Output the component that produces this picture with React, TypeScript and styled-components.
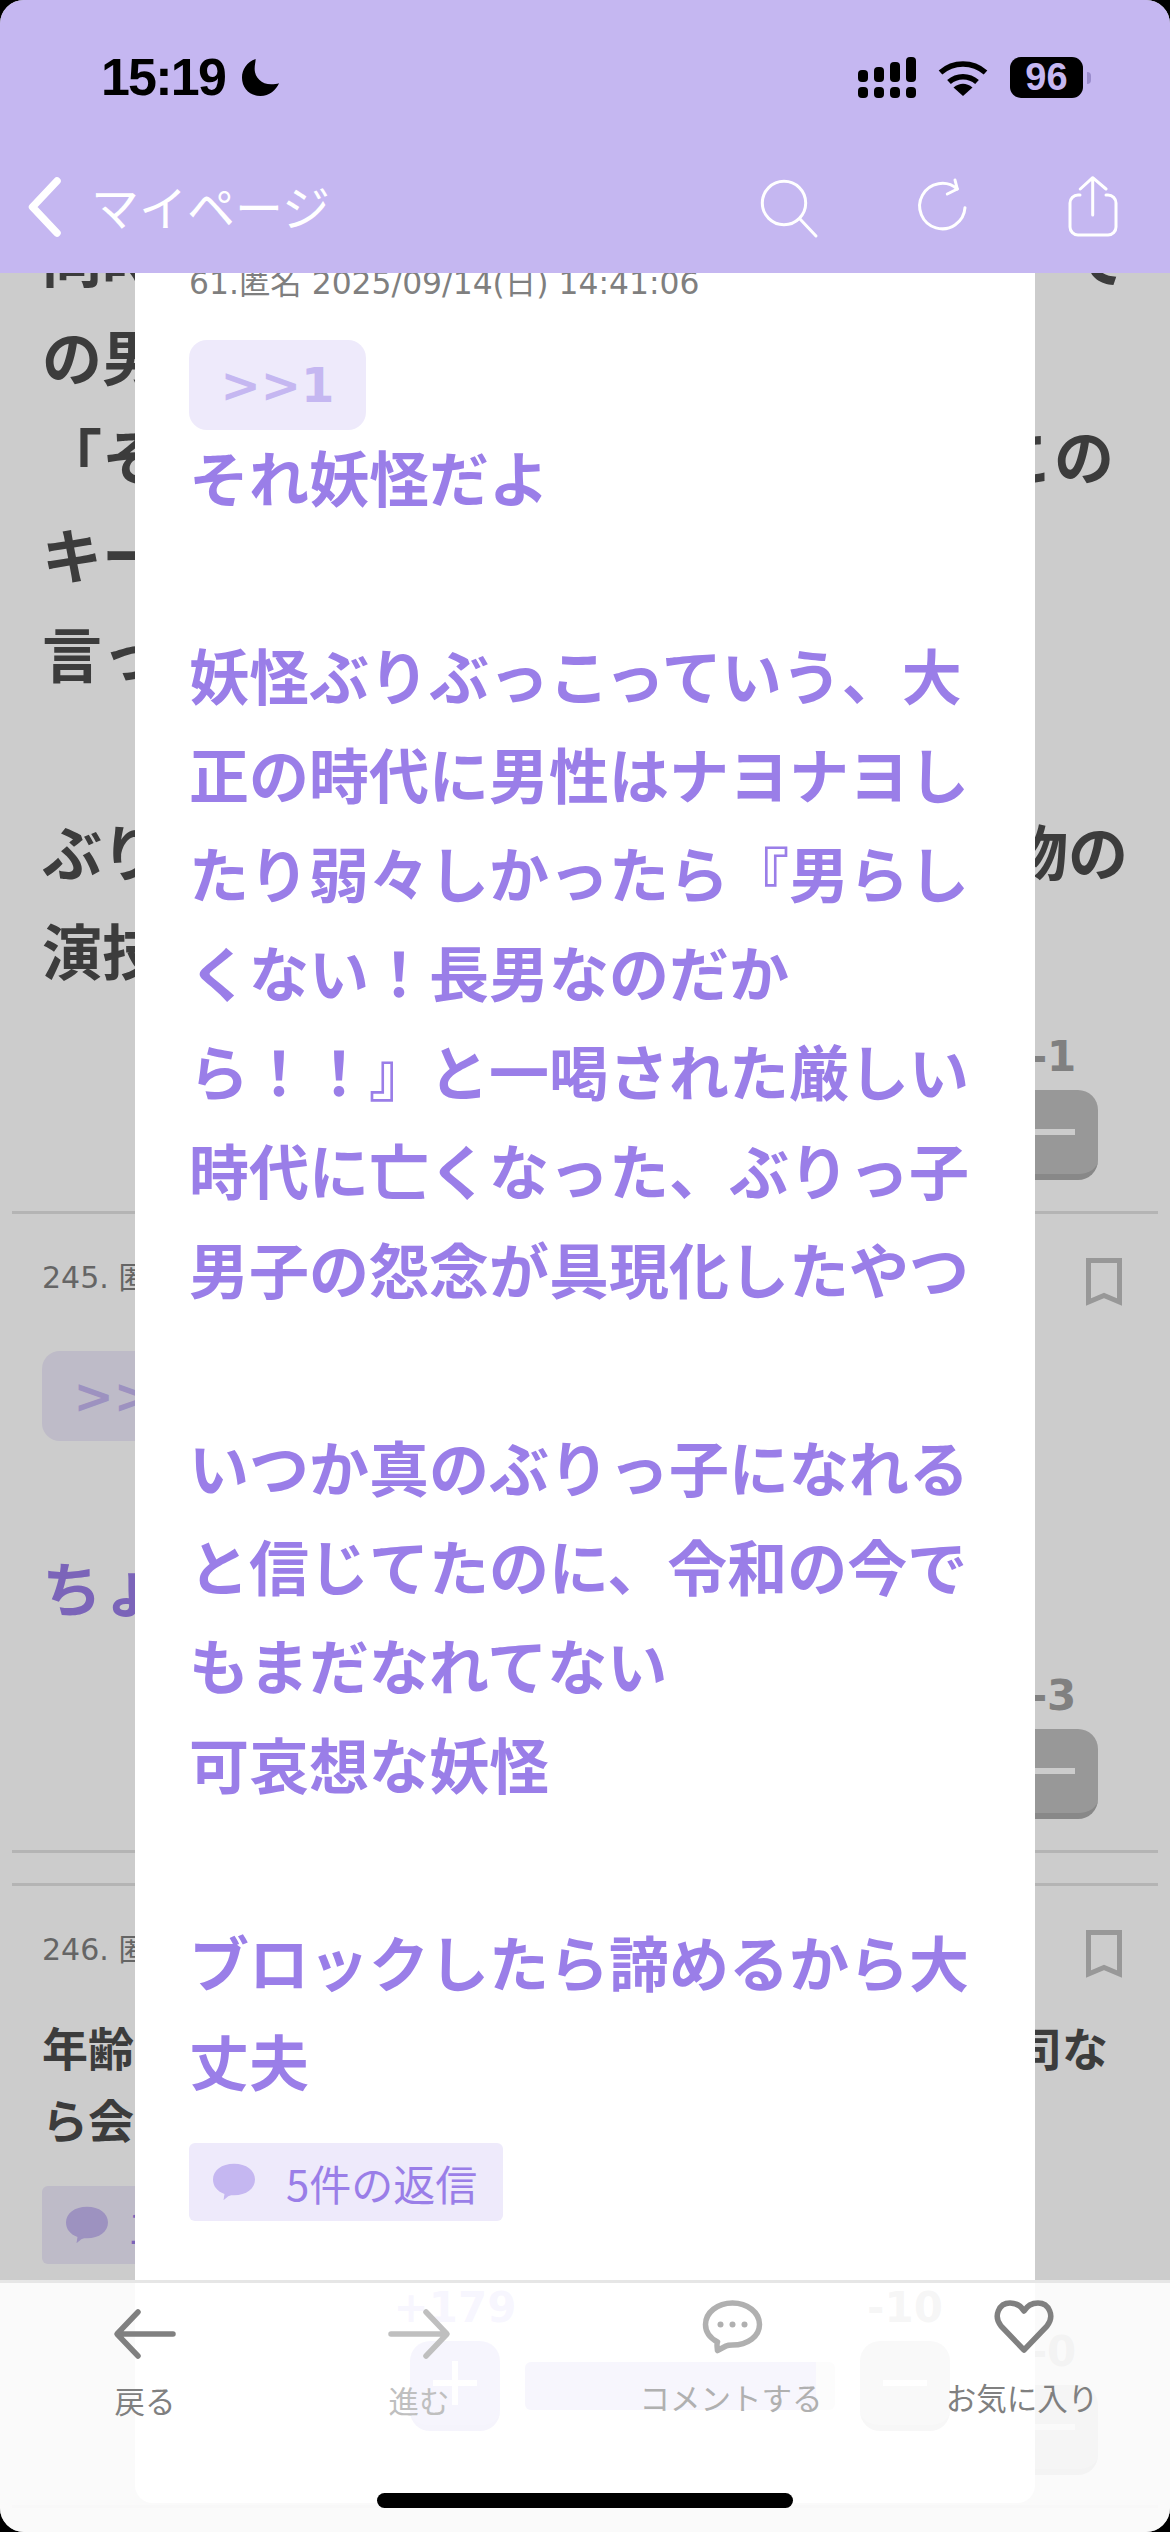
import React from "react";
import styled, { createGlobalStyle } from "styled-components";

const GlobalStyle = createGlobalStyle`
  html, body {
    margin: 0;
    padding: 0;
    background: #000;
  }
  * {
    box-sizing: border-box;
  }
`;

const JP = `"Noto Sans CJK JP", "Noto Sans", sans-serif`;
const META = `"DejaVu Sans", "Noto Sans CJK JP", sans-serif`;

const PLUS_VOTES = 179;
const MINUS_VOTES = 10;

const MODAL_TEXT = `それ妖怪だよ

妖怪ぶりぶっこっていう、大
正の時代に男性はナヨナヨし
たり弱々しかったら『男らし
くない！長男なのだか
ら！！』と一喝された厳しい
時代に亡くなった、ぶりっ子
男子の怨念が具現化したやつ

いつか真のぶりっ子になれる
と信じてたのに、令和の今で
もまだなれてない
可哀想な妖怪

ブロックしたら諦めるから大
丈夫`;

const Moon = () => (
  <MoonSvg viewBox="0 0 40 40">
    <path d="M15 1C6 4 1 12 1 20c0 11 8 19 19 19 9 0 16-6 19-13-2 1-5 1-8 1-10 0-17-7-17-16 0-4 1-7 1-10Z" />
  </MoonSvg>
);

const Signal = () => (
  <svg width="58" height="41" viewBox="0 0 58 41">
    <rect x="0" y="13" width="10" height="12" rx="4" />
    <rect x="16" y="10" width="10" height="15" rx="4" />
    <rect x="32" y="5" width="10" height="20" rx="4" />
    <rect x="48" y="0" width="10" height="25" rx="4" />
    <rect x="0" y="30" width="10" height="11" rx="4" />
    <rect x="16" y="30" width="10" height="11" rx="4" />
    <rect x="32" y="30" width="10" height="11" rx="4" />
    <rect x="48" y="30" width="10" height="11" rx="4" />
  </svg>
);

const Wifi = () => (
  <svg width="50" height="37" viewBox="0 0 50 37">
    <path d="M2.5 13.5A34 34 0 0 1 47.5 13.5" fill="none" stroke="#000" strokeWidth="5.5" />
    <path d="M11 23A21 21 0 0 1 39 23" fill="none" stroke="#000" strokeWidth="5.5" />
    <path d="M25 37 15.5 28.5Q25 21 34.5 28.5Z" />
  </svg>
);

const Chevron = () => (
  <NavSvg width="36" height="64" viewBox="0 0 36 64">
    <path d="M31 5 6.500 31 31 57" strokeWidth="7.500" />
  </NavSvg>
);

const Search = () => (
  <NavSvg width="60" height="64" viewBox="0 0 60 64">
    <circle cx="25" cy="27" r="21.7" strokeWidth="3" />
    <path d="M41 43 57 60" strokeWidth="3" />
  </NavSvg>
);

const Reload = () => (
  <NavSvg width="60" height="64" viewBox="0 0 60 64">
    <path d="M54 31.7A22.7 22.7 0 1 1 46.3 13" strokeWidth="3" />
    <path d="M44 4 46.3 13 36.3 18" strokeWidth="3" />
  </NavSvg>
);

const Share = () => (
  <NavSvg width="60" height="64" viewBox="0 0 60 64">
    <path d="M17 19h-2a8 8 0 0 0-8 8v24a8 8 0 0 0 8 8h30a8 8 0 0 0 8-8V27a8 8 0 0 0-8-8h-2" strokeWidth="3" />
    <path d="M29.7 39V2M17.3 13 29.7 1.7 43 13" strokeWidth="3" />
  </NavSvg>
);

const Bookmark = () => (
  <BookmarkSvg viewBox="0 0 36 48">
    <path d="M2.500 2.500h31V44L18 37.500 2.500 44Z" />
  </BookmarkSvg>
);

const ReplyBubble = () => (
  <ReplySvg viewBox="0 0 44 38">
    <path d="M22 0c13 0 22 7 22 16.500S35 33 22 33c-2 0-4 0-6 1l-5 4 1-6.500C4 29 0 23 0 16.500 0 7 9 0 22 0Z" />
  </ReplySvg>
);

const VoteColumn = ({ label, kind = "minus", top = 0 }: { label: string; kind?: "plus" | "minus"; top?: number }) => (
  <VoteCol $top={top}>
    <VoteLabel $kind={kind}>{label}</VoteLabel>
    <VoteButton $kind={kind}>
      <VoteDash />
      {kind === "plus" && <VoteStem />}
    </VoteButton>
  </VoteCol>
);

const App = () => {
  const fill = (PLUS_VOTES / (PLUS_VOTES + MINUS_VOTES)) * 99;

  return (
    <Page>
      <GlobalStyle />
      <Header>
        <StatusBar>
          <Clock>
            <Time>15:19</Time>
            <Moon />
          </Clock>
          <StatusIcons>
            <Signal />
            <Wifi />
            <Battery>
              <BatteryBody>96</BatteryBody>
              <BatteryNub />
            </Battery>
          </StatusIcons>
        </StatusBar>
        <Nav>
          <Chevron />
          <NavTitle>マイページ</NavTitle>
          <NavActions>
            <Search />
            <Reload />
            <Share />
          </NavActions>
        </Nav>
      </Header>

      <Thread>
        <Post $top={-67}>
          <BodyLine><span>同時</span><span>て</span></BodyLine>
          <BodyLine>の男</BodyLine>
          <BodyLine $end={14}><span>「そ</span><span>この</span></BodyLine>
          <BodyLine>キー</BodyLine>
          <BodyLine>言っ</BodyLine>
          <BodyLine />
          <BodyLine><span>ぶり</span><span>物の</span></BodyLine>
          <BodyLine>演技</BodyLine>
          <VoteColumn label="-1" top={34} />
        </Post>
        <Divider $top={31} />

        <Post $top={44}>
          <MetaRow>
            <MetaText>245. 匿名</MetaText>
            <Bookmark />
          </MetaRow>
          <Anchor $top={45}>&gt;&gt;1</Anchor>
          <BodyLine $top={95} $purple>ちょ</BodyLine>
          <VoteColumn label="-3" top={36} />
        </Post>
        <Divider $top={31} />
        <Divider $top={30} />

        <Post $top={44}>
          <MetaRow>
            <MetaText>246. 匿名</MetaText>
            <Bookmark />
          </MetaRow>
          <BodyLine $top={32} $small $end={20}><span>年齢</span><span>司な</span></BodyLine>
          <BodyLine $small>ら会</BodyLine>
          <ReplyBadge $top={32} $gap={20}>
            <ReplyBubble />
            1件の返信
          </ReplyBadge>
          <VoteColumn label="-0" top={63} />
        </Post>
        <Divider $top={30} />
      </Thread>

      <Scrim />

      <Modal>
        <ModalMeta>61.匿名 2025/09/14(日) 14:41:06</ModalMeta>
        <Anchor $top={36}>&gt;&gt;1</Anchor>
        <ModalBody>{MODAL_TEXT}</ModalBody>
        <ReplyBadge $top={34} $gap={31}>
          <ReplyBubble />
          5件の返信
        </ReplyBadge>
        <VoteRow>
          <VoteColumn label="+179" kind="plus" />
          <VoteBar>
            <VoteBarFill style={{ width: `${fill}%` }} />
          </VoteBar>
          <VoteColumn label="-10" />
        </VoteRow>
      </Modal>

      <TabBar>
        <TabItem $top={27} $gap={24}>
          <TabSvg width="60" height="48" viewBox="0 0 60 48" $color="#808080">
            <path d="M23 2 2 24l21 22M3 24h55" />
          </TabSvg>
          <TabLabel $color="#808080">戻る</TabLabel>
        </TabItem>
        <TabItem $top={27} $gap={24}>
          <TabSvg width="60" height="48" viewBox="0 0 60 48" $color="#bfbfbf">
            <path d="M37 2 58 24 37 46M2 24h55" />
          </TabSvg>
          <TabLabel $color="#bfbfbf">進む</TabLabel>
        </TabItem>
        <TabItem $top={17} $gap={25}>
          <TabSvg width="60" height="54" viewBox="-2 0 60 54" $color="#b0b0b0">
            <path d="M29.5 3c15 0 27 9.500 27 21.500S44.500 45 29.500 45c-2.500 0-4.500 0-6.500 1l-8.500 4.500c-.5-3.500-.5-7.500 0-8.500C7 38 2.500 31.500 2.500 24.500 2.500 12.500 14.500 3 29.500 3Z" />
            <circle cx="17.500" cy="24.500" r="3" fill="#b0b0b0" stroke="none" />
            <circle cx="29.500" cy="24.500" r="3" fill="#b0b0b0" stroke="none" />
            <circle cx="41.500" cy="24.500" r="3" fill="#b0b0b0" stroke="none" />
          </TabSvg>
          <TabLabel $color="#b0b0b0">コメントする</TabLabel>
        </TabItem>
        <TabItem $top={17} $gap={25}>
          <TabSvg width="60" height="54" viewBox="-2 0 60 54" $color="#808080">
            <path d="M30 50 7 26C-1 16 5 3 16 3c6 0 11 3 14 8 3-5 8-8 14-8 11 0 17 13 9 23Z" />
          </TabSvg>
          <TabLabel $color="#808080">お気に入り</TabLabel>
        </TabItem>
      </TabBar>

      <HomeIndicator />
    </Page>
  );
};

export default App;

const Page = styled.div`
  position: relative;
  display: flex;
  flex-direction: column;
  width: 1170px;
  height: 2532px;
  overflow: hidden;
  border-radius: 24px;
  background: #fff;
  font-family: ${JP};
`;

const Header = styled.header`
  position: relative;
  z-index: 3;
  flex: none;
  height: 273px;
  padding-top: 57px;
  background: #c5b7f1;
`;

const StatusBar = styled.div`
  display: flex;
  justify-content: space-between;
  align-items: flex-start;
  height: 41px;
  padding: 0 79px 0 101px;
`;

const Clock = styled.div`
  display: flex;
  align-items: center;
  gap: 16px;
  height: 41px;
`;

const Time = styled.span`
  font-family: "Liberation Sans", sans-serif;
  font-size: 52px;
  font-weight: 700;
  line-height: 41px;
  letter-spacing: -1.8px;
  color: #000;
`;

const MoonSvg = styled.svg`
  width: 39px;
  height: 39px;
`;

const StatusIcons = styled.div`
  display: flex;
  align-items: center;
  height: 41px;
  gap: 22px;
`;

const Battery = styled.div`
  display: flex;
  align-items: center;
  gap: 4px;
`;

const BatteryBody = styled.div`
  width: 73px;
  height: 41px;
  border-radius: 11px;
  background: #000;
  color: #c5b7f1;
  font-family: "Liberation Sans", sans-serif;
  font-size: 38px;
  font-weight: 700;
  line-height: 41px;
  text-align: center;
`;

const BatteryNub = styled.div`
  width: 4px;
  height: 12px;
  border-radius: 0 4px 4px 0;
  background: #9a8ccc;
`;

const Nav = styled.nav`
  display: flex;
  align-items: center;
  height: 64px;
  margin-top: 78px;
  padding: 0 47px 0 26px;
`;

const NavSvg = styled.svg`
  flex: none;
  fill: none;
  stroke: #fff;
  stroke-linecap: round;
  stroke-linejoin: round;
`;

const NavTitle = styled.span`
  margin: 0 0 5px 29px;
  font-size: 48px;
  line-height: 59px;
  color: #fff;
`;

const NavActions = styled.div`
  display: flex;
  gap: 92px;
  margin-left: auto;
`;

const Thread = styled.main`
  flex: 1;
  min-height: 0;
  overflow: hidden;
`;

const Post = styled.article<{ $top: number }>`
  display: flex;
  flex-direction: column;
  margin-top: ${(p) => p.$top}px;
  padding: 0 42px;
`;

const BodyLine = styled.div<{ $top?: number; $small?: boolean; $purple?: boolean; $end?: number }>`
  display: flex;
  justify-content: space-between;
  height: ${(p) => (p.$small ? 72 : 99)}px;
  margin-top: ${(p) => p.$top ?? 0}px;
  padding-right: ${(p) => p.$end ?? 0}px;
  font-size: ${(p) => (p.$small ? 46 : 60)}px;
  font-weight: 700;
  line-height: ${(p) => (p.$small ? 72 : 99)}px;
  white-space: nowrap;
  color: ${(p) => (p.$purple ? "#9a7ee8" : "#4c4c4c")};
`;

const Divider = styled.hr<{ $top: number }>`
  height: 3px;
  margin: ${(p) => p.$top}px 12px 0;
  border: 0;
  background: #e1e1e1;
`;

const MetaRow = styled.div`
  display: flex;
  justify-content: space-between;
  align-items: flex-start;
  height: 48px;
`;

const MetaText = styled.div`
  font-family: ${META};
  font-size: 30px;
  line-height: 40px;
  white-space: nowrap;
  color: #7f7f7f;
`;

const ModalMeta = styled(MetaText)`
  font-size: 31.4px;
  line-height: 41px;
`;

const BookmarkSvg = styled.svg`
  width: 36px;
  height: 48px;
  margin-right: 6px;
  fill: none;
  stroke: #bfbfbf;
  stroke-width: 5;
`;

const Anchor = styled.div<{ $top: number }>`
  align-self: flex-start;
  flex: none;
  width: 177px;
  height: 90px;
  margin-top: ${(p) => p.$top}px;
  border-radius: 18px;
  background: #eeeafb;
  font-family: ${META};
  font-size: 48px;
  font-weight: 700;
  line-height: 90px;
  text-align: center;
  color: #c5b7f1;
`;

const ReplyBadge = styled.div<{ $top: number; $gap: number }>`
  display: flex;
  align-items: center;
  align-self: flex-start;
  flex: none;
  gap: ${(p) => p.$gap}px;
  height: 78px;
  margin-top: ${(p) => p.$top}px;
  padding: 0 26px 0 24px;
  border-radius: 6px;
  background: #eeeafb;
  font-size: 42px;
  white-space: nowrap;
  color: #9a7ee8;
`;

const ReplySvg = styled.svg`
  flex: none;
  width: 42px;
  height: 38px;
  fill: #c5b7f1;
`;

const VoteCol = styled.div<{ $top: number }>`
  display: flex;
  flex-direction: column;
  align-items: center;
  align-self: flex-end;
  flex: none;
  gap: 8px;
  width: 90px;
  margin-top: ${(p) => p.$top}px;
  margin-right: 30px;
`;

const VoteLabel = styled.div<{ $kind: "plus" | "minus" }>`
  height: 50px;
  font-family: ${META};
  font-size: 42px;
  font-weight: 700;
  line-height: 50px;
  white-space: nowrap;
  color: ${(p) => (p.$kind === "plus" ? "#b0a0f0" : "#a0a0a0")};
`;

const VoteButton = styled.div<{ $kind: "plus" | "minus" }>`
  position: relative;
  flex: none;
  width: 90px;
  height: 90px;
  border-radius: 20px;
  border-bottom: 6px solid ${(p) => (p.$kind === "plus" ? "#9a90e0" : "#aaaaaa")};
  background: ${(p) => (p.$kind === "plus" ? "#a59bec" : "#bfbfbf")};
`;

const VoteDash = styled.span`
  position: absolute;
  top: 39px;
  left: 23px;
  width: 44px;
  height: 6px;
  background: #fff;
`;

const VoteStem = styled.span`
  position: absolute;
  top: 20px;
  left: 42px;
  width: 6px;
  height: 44px;
  background: #fff;
`;

const Scrim = styled.div`
  position: absolute;
  inset: 0;
  z-index: 1;
  background: rgba(0, 0, 0, 0.2);
`;

const Modal = styled.section`
  position: absolute;
  top: 240px;
  left: 135px;
  bottom: 29px;
  z-index: 2;
  display: flex;
  flex-direction: column;
  width: 900px;
  padding: 23px 0 0 54px;
  overflow: hidden;
  border-radius: 0 0 18px 18px;
  background: #fff;
`;

const ModalBody = styled.div`
  flex: none;
  margin-top: -4px;
  font-size: 60px;
  font-weight: 700;
  line-height: 99px;
  white-space: pre;
  color: #9a7ee8;
`;

const VoteRow = styled.div`
  display: flex;
  align-items: flex-end;
  justify-content: flex-end;
  flex: none;
  gap: 25px;
  margin-top: 62px;
  ${VoteCol} {
    margin: 0;
  }
  ${VoteCol}:last-child {
    margin-right: 85px;
  }
`;

const VoteBar = styled.div`
  width: 310px;
  height: 48px;
  margin-bottom: 21px;
  overflow: hidden;
  border-radius: 6px;
  background: #d9d9d9;
`;

const VoteBarFill = styled.div`
  height: 100%;
  background: #afa5eb;
`;

const TabBar = styled.nav`
  position: absolute;
  left: 0;
  right: 0;
  bottom: 0;
  z-index: 4;
  display: grid;
  grid-template-columns: 290px 258px 366px 216px;
  height: 252px;
  border-top: 3px solid #e6e6e6;
  background: rgba(255, 255, 255, 0.9);
`;

const TabItem = styled.div<{ $top: number; $gap: number }>`
  display: flex;
  flex-direction: column;
  align-items: center;
  gap: ${(p) => p.$gap}px;
  padding-top: ${(p) => p.$top}px;
`;

const TabSvg = styled.svg<{ $color: string }>`
  flex: none;
  overflow: visible;
  fill: none;
  stroke: ${(p) => p.$color};
  stroke-width: 5.5;
  stroke-linecap: round;
  stroke-linejoin: round;
`;

const TabLabel = styled.span<{ $color: string }>`
  font-size: 30.500px;
  line-height: 36px;
  white-space: nowrap;
  color: ${(p) => p.$color};
`;

const HomeIndicator = styled.div`
  position: absolute;
  left: 377px;
  bottom: 24px;
  z-index: 5;
  width: 416px;
  height: 15px;
  border-radius: 8px;
  background: #000;
`;
